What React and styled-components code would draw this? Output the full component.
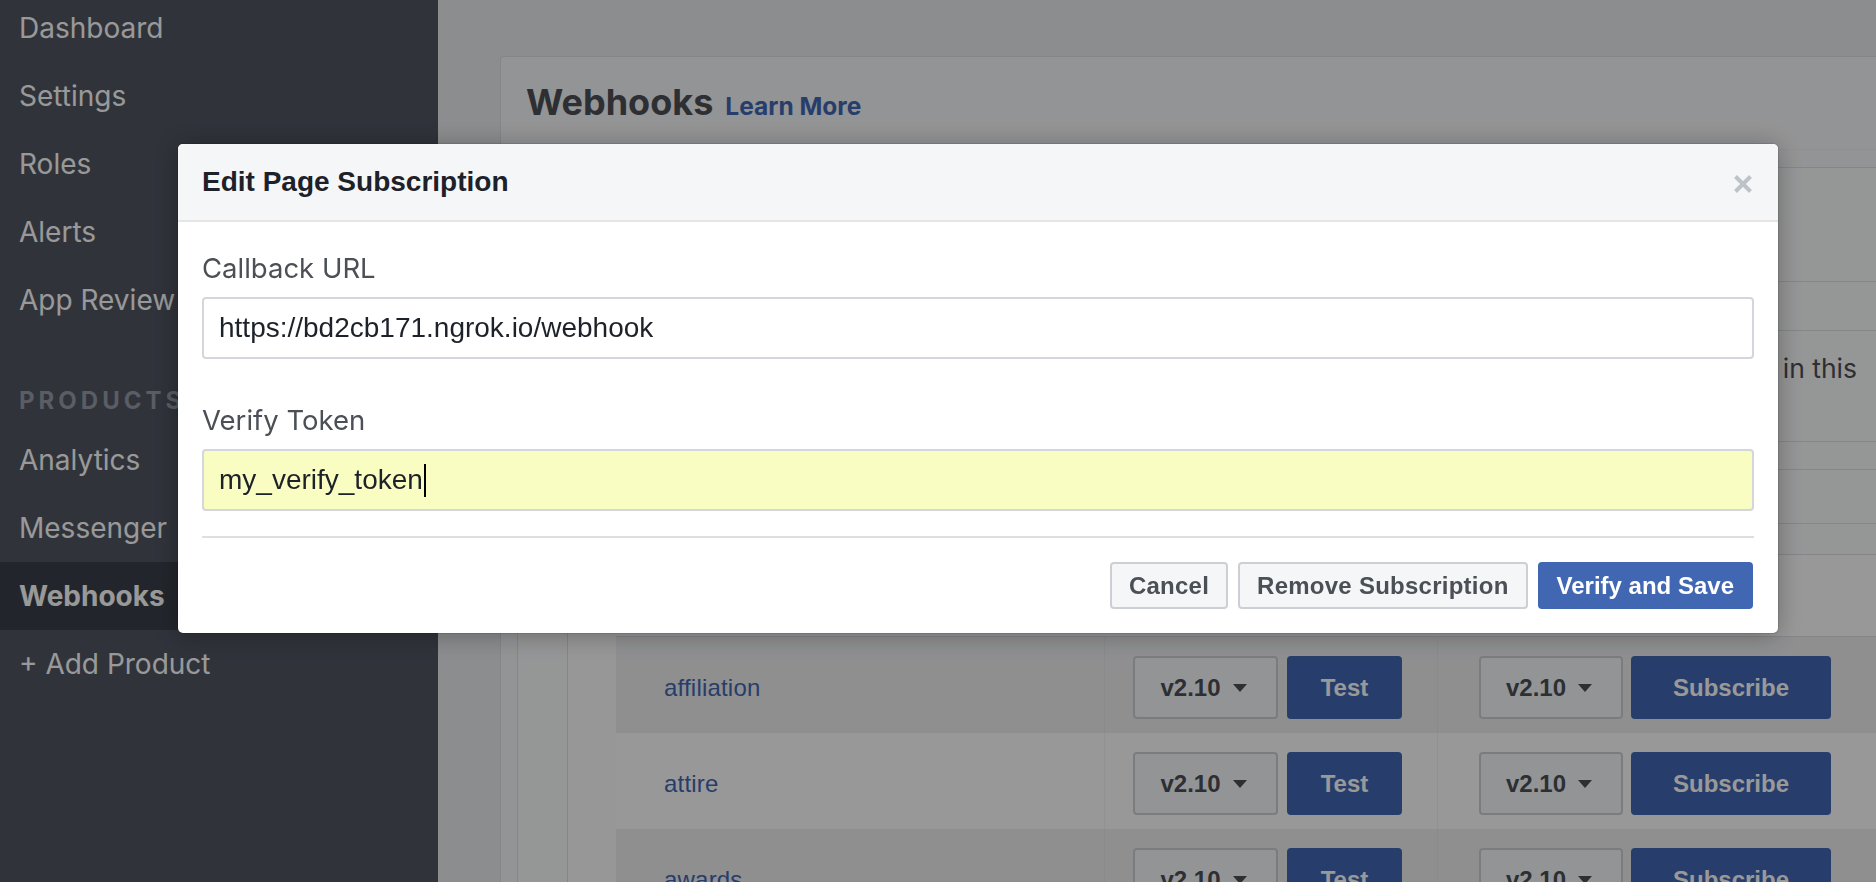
import React from 'react';
import styled, { createGlobalStyle } from 'styled-components';

const GlobalStyle = createGlobalStyle`
  html, body { margin: 0; padding: 0; }
  body {
    width: 1876px;
    height: 882px;
    overflow: hidden;
    background: #e9ebee;
    font-family: Inter, "Liberation Sans", sans-serif;
  }
  * { box-sizing: border-box; }
`;

const Page = styled.div`
  display: flex;
  width: 1876px;
  height: 882px;
  overflow: hidden;
`;

/* ---------- Sidebar ---------- */
const Sidebar = styled.nav`
  width: 438px;
  flex-shrink: 0;
  height: 100%;
  background: #505562;
  overflow: hidden;
`;

const NavList = styled.ul`
  list-style: none;
  margin: -6px 0 0;
  padding: 0;
`;

const NavItem = styled.li`
  height: 68px;
  display: flex;
  align-items: center;
  padding-left: 19px;
  font-family: Inter, sans-serif;
  font-size: 28px;
  font-weight: ${(p) => (p.$active ? 700 : 400)};
  color: #ffffff;
  background: ${(p) => (p.$active ? '#3a3f49' : 'transparent')};
  white-space: nowrap;
`;

const NavSection = styled.li`
  height: 92px;
  display: flex;
  align-items: flex-end;
  padding: 0 0 13px 19px;
  font-family: Inter, sans-serif;
  font-size: 24px;
  line-height: 24px;
  font-weight: 700;
  letter-spacing: 4px;
  color: #969ba5;
`;

/* ---------- Main page (behind the dialog) ---------- */
const Main = styled.main`
  flex: 1;
  display: flex;
  flex-direction: column;
  padding: 56px 0 0 62px;
  background: #e9ebee;
  overflow: hidden;
`;

const Panel = styled.section`
  flex: 1;
  background: #f6f7f9;
  border: 1px solid #dddfe2;
  border-right: none;
  border-bottom: none;
  border-radius: 4px 0 0 0;
`;

const PanelHeader = styled.header`
  height: 93px;
  display: flex;
  align-items: center;
  padding: 0 0 3px 25px;
  border-bottom: 1px solid #eef0f2;
`;

const PanelTitle = styled.h2`
  margin: 0;
  display: flex;
  align-items: baseline;
  gap: 12px;
  font-family: Inter, sans-serif;
  font-size: 36px;
  font-weight: 700;
  color: #4b4f56;
`;

const HeaderLink = styled.a`
  font-family: Inter, sans-serif;
  font-size: 24.5px;
  font-weight: 700;
  color: #4267b2;
  text-decoration: none;
`;

const PanelBody = styled.div`
  padding: 17px 0 0 16px;
`;

const ProductBox = styled.div`
  border-top: 1px solid #dddfe2;
  border-left: 1px solid #dddfe2;
  background: #f9fafb;
`;

const SettingRow = styled.div`
  height: ${(p) => p.$h}px;
  border-bottom: 1px solid #dddfe2;
  padding: ${(p) => p.$pad || '0 19px 0 48px'};
  display: flex;
  flex-direction: column;
  font-family: Inter, sans-serif;
  font-size: 26.5px;
  color: #4b4f56;
`;

const DescLine = styled.div`
  line-height: 36px;
  white-space: nowrap;
  overflow: hidden;
  text-align: right;
`;

const TableBox = styled.div`
  margin-left: 49px;
  border-left: 1px solid #dddfe2;
  padding-left: 48px;
  background: #fcfcfd;
`;

const TableRow = styled.div`
  display: grid;
  grid-template-columns: 488px 333px 1fr;
  height: ${(p) => (p.$head ? 82 : 96)}px;
  background: ${(p) => (p.$shade ? '#eeeff1' : '#fdfdfd')};
  border-bottom: ${(p) => (p.$head ? '1px solid #dddfe2' : 'none')};
`;

const Cell = styled.div`
  display: flex;
  align-items: center;
  gap: ${(p) => p.$gap || 0}px;
  padding: 5px 0 0 ${(p) => p.$pl || 0}px;
  border-left: ${(p) => (p.$divider ? '1px solid rgba(0,0,0,0.035)' : 'none')};
`;

const FieldName = styled.a`
  font-family: "Liberation Sans", Arial, sans-serif;
  font-size: 24px;
  letter-spacing: 0.2px;
  color: #4267b2;
  text-decoration: none;
`;

const VersionSelect = styled.div`
  width: ${(p) => p.$w}px;
  height: 63px;
  display: flex;
  align-items: center;
  justify-content: center;
  gap: 12px;
  padding-right: 4px;
  background: #f6f7f9;
  border: 2px solid #ccd0d5;
  border-radius: 4px;
  font-family: "Liberation Sans", Arial, sans-serif;
  font-size: 24px;
  font-weight: 700;
  color: #4b4f56;
`;

const Caret = styled.span`
  width: 0;
  height: 0;
  border-left: 7px solid transparent;
  border-right: 7px solid transparent;
  border-top: 8px solid #4b4f56;
`;

const BlueButton = styled.button`
  width: ${(p) => p.$w}px;
  height: 63px;
  border: none;
  border-radius: 4px;
  background: #4267b2;
  color: #ffffff;
  font-family: "Liberation Sans", Arial, sans-serif;
  font-size: 24px;
  font-weight: 700;
  padding: 0;
`;

/* ---------- Dialog ---------- */
const Backdrop = styled.div`
  position: fixed;
  inset: 0;
  z-index: 10;
  background: rgba(0, 0, 0, 0.4);
  padding: 144px 0 0 178px;
`;

const Dialog = styled.div`
  width: 1600px;
  background: #ffffff;
  border-radius: 5px;
  overflow: hidden;
  box-shadow: 0 2px 26px rgba(0, 0, 0, 0.3), 0 0 0 1px rgba(0, 0, 0, 0.1);
`;

const DialogHeader = styled.div`
  height: 78px;
  display: flex;
  align-items: center;
  justify-content: space-between;
  padding: 0 25px 0 24px;
  background: #f5f6f7;
  border-bottom: 2px solid #e5e5e5;
`;

const DialogTitle = styled.h3`
  margin: 0;
  font-family: "Liberation Sans", Arial, sans-serif;
  font-size: 28px;
  font-weight: 700;
  color: #1d2129;
  line-height: 1;
`;

const CloseButton = styled.button`
  width: 20px;
  height: 20px;
  margin-top: 4px;
  padding: 0;
  border: none;
  background: transparent;
  display: flex;
`;

const DialogBody = styled.div`
  padding: 30px 24px 0;
  display: flex;
  flex-direction: column;
  gap: 45px;
`;

const Field = styled.div`
  display: flex;
  flex-direction: column;
  gap: 13px;
`;

const Label = styled.label`
  font-family: Inter, sans-serif;
  font-size: 27.5px;
  line-height: 32px;
  color: #4b4f56;
`;

const TextBox = styled.div`
  height: 62px;
  display: flex;
  align-items: center;
  padding: 0 15px;
  border: 2px solid #d3d6db;
  border-radius: 4px;
  background: ${(p) => (p.$autofill ? '#f9fdc1' : '#ffffff')};
  font-family: "Liberation Sans", Arial, sans-serif;
  font-size: 28px;
  color: #1d2129;
`;

const TextCaret = styled.span`
  display: inline-block;
  width: 2px;
  height: 33px;
  margin-left: 1px;
  background: #000;
`;

const Divider = styled.hr`
  margin: 25px 24px 0;
  border: none;
  height: 2px;
  background: #dddfe2;
`;

const DialogFooter = styled.div`
  display: flex;
  justify-content: flex-end;
  gap: 10px;
  padding: 24px 25px 24px 24px;
`;

const FooterButton = styled.button`
  height: 47px;
  padding: 0 17px;
  border-radius: 4px;
  border: 2px solid ${(p) => (p.$primary ? '#4267b2' : '#ccd0d5')};
  background: ${(p) => (p.$primary ? '#4267b2' : '#f5f6f7')};
  color: ${(p) => (p.$primary ? '#ffffff' : '#4b4f56')};
  font-family: "Liberation Sans", Arial, sans-serif;
  font-size: 24px;
  font-weight: 700;
  letter-spacing: ${(p) => (p.$primary ? '0' : '0.25px')};
  white-space: nowrap;
`;

const navTop = ['Dashboard', 'Settings', 'Roles', 'Alerts', 'App Review'];
const navProducts = ['Analytics', 'Messenger', 'Webhooks'];
const fields = ['affiliation', 'attire', 'awards', 'band_interests'];

export default function App() {
  return (
    <>
      <GlobalStyle />
      <Page>
        <Sidebar>
          <NavList>
            {navTop.map((n) => (
              <NavItem key={n}>{n}</NavItem>
            ))}
            <NavSection>PRODUCTS</NavSection>
            {navProducts.map((n) => (
              <NavItem key={n} $active={n === 'Webhooks'}>
                {n}
              </NavItem>
            ))}
            <NavItem>+ Add Product</NavItem>
          </NavList>
        </Sidebar>

        <Main>
          <Panel>
            <PanelHeader>
              <PanelTitle>
                Webhooks <HeaderLink href="#">Learn More</HeaderLink>
              </PanelTitle>
            </PanelHeader>
            <PanelBody>
              <ProductBox>
                <SettingRow $h={114} />
                <SettingRow $h={49} />
                <SettingRow $h={111} $pad="19px 19px 0 48px">
                  <DescLine>Pages in this</DescLine>
                </SettingRow>
                <SettingRow $h={28} />
                <SettingRow $h={54} />
                <SettingRow $h={31} />
                <TableBox>
                  <TableRow $head />
                  {fields.map((f, i) => (
                    <TableRow key={f} $shade={i % 2 === 0}>
                      <Cell $pl={48}>
                        <FieldName href="#">{f}</FieldName>
                      </Cell>
                      <Cell $pl={28} $gap={9} $divider>
                        <VersionSelect $w={145}>
                          v2.10 <Caret />
                        </VersionSelect>
                        <BlueButton $w={115}>Test</BlueButton>
                      </Cell>
                      <Cell $pl={41} $gap={8} $divider>
                        <VersionSelect $w={144}>
                          v2.10 <Caret />
                        </VersionSelect>
                        <BlueButton $w={200}>Subscribe</BlueButton>
                      </Cell>
                    </TableRow>
                  ))}
                </TableBox>
              </ProductBox>
            </PanelBody>
          </Panel>
        </Main>
      </Page>

      <Backdrop>
        <Dialog role="dialog">
          <DialogHeader>
            <DialogTitle>Edit Page Subscription</DialogTitle>
            <CloseButton aria-label="Close">
              <svg width="20" height="20" viewBox="0 0 20 20">
                <path d="M2.5 2.5 L17.5 17.5 M17.5 2.5 L2.5 17.5" stroke="#bec2c9" strokeWidth="4" fill="none" />
              </svg>
            </CloseButton>
          </DialogHeader>
          <DialogBody>
            <Field>
              <Label>Callback URL</Label>
              <TextBox>https://bd2cb171.ngrok.io/webhook</TextBox>
            </Field>
            <Field>
              <Label>Verify Token</Label>
              <TextBox $autofill>
                my_verify_token
                <TextCaret />
              </TextBox>
            </Field>
          </DialogBody>
          <Divider />
          <DialogFooter>
            <FooterButton>Cancel</FooterButton>
            <FooterButton>Remove Subscription</FooterButton>
            <FooterButton $primary>Verify and Save</FooterButton>
          </DialogFooter>
        </Dialog>
      </Backdrop>
    </>
  );
}
